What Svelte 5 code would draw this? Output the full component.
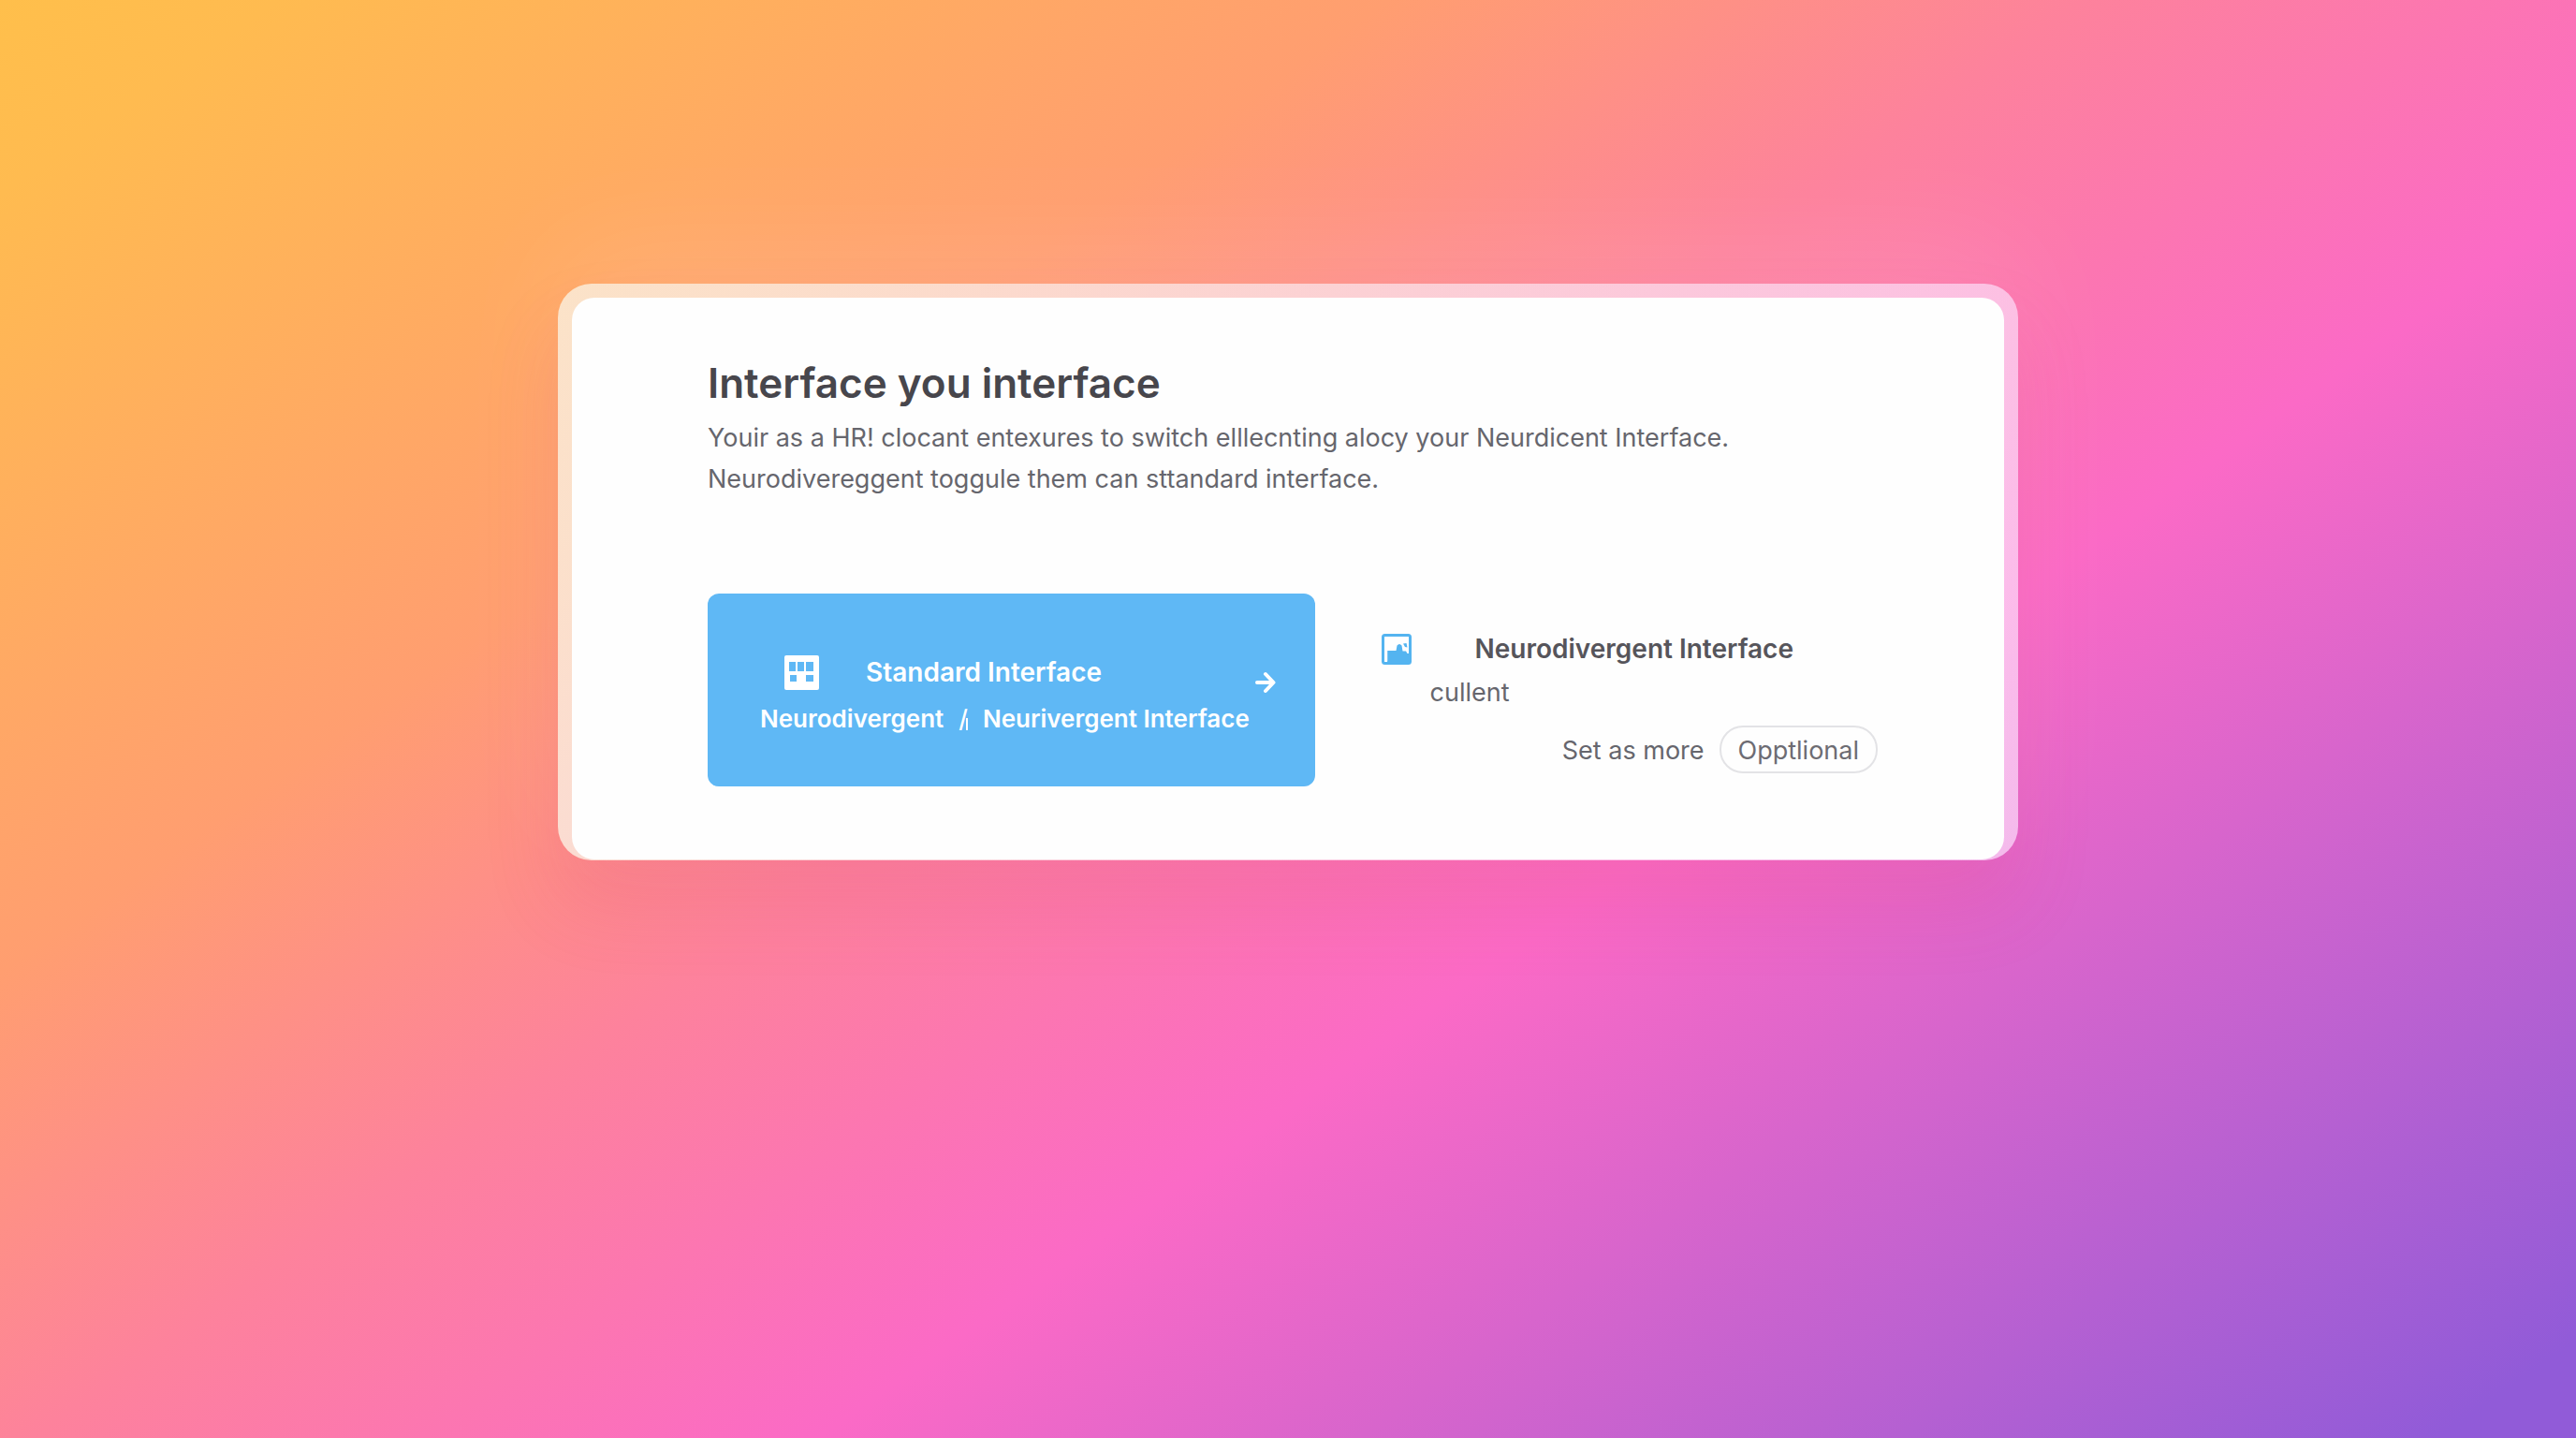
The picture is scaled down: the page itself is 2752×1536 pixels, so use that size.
<script>
  let selected = $state('standard');
</script>

<main class="page">
  <section class="frame">
    <div class="card">
      <h1>Interface you interface</h1>
      <p class="intro">
        Youir as a HR! clocant entexures to switch elllecnting alocy your Neurdicent Interface.<br />
        Neurodivereggent toggule them can sttandard interface.
      </p>

      <div class="options">
        <button
          class="primary"
          type="button"
          aria-pressed={selected === 'standard'}
          onclick={() => (selected = 'standard')}
        >
          <span class="lines">
            <span class="line first">
              <svg class="building" viewBox="0 0 37 37" aria-hidden="true">
                <rect width="37" height="37" rx="2" fill="#fff" />
                <g fill="#5fb8f5">
                  <rect x="5" y="7" width="7" height="10" />
                  <rect x="14" y="7" width="7" height="10" />
                  <rect x="23" y="7" width="8" height="10" />
                  <rect x="6" y="21" width="7" height="7" />
                  <rect x="23" y="21" width="8" height="7" />
                </g>
              </svg>
              <span>Standard Interface</span>
            </span>
            <span class="line second">
              <span>Neurodivergent</span>
              <span class="slash">/</span>
              <span>Neurivergent Interface</span>
            </span>
          </span>
          <svg class="arrow" viewBox="0 0 22 24" aria-hidden="true">
            <path d="M2 12H19M11 3L19.5 12L11 21" />
          </svg>
        </button>

        <article class="secondary">
          <header>
            <svg class="picture" viewBox="0 0 32 33" aria-hidden="true">
              <rect x="1.5" y="1.5" width="29" height="30" rx="2" fill="#fff" stroke="#54b4f0" stroke-width="3" />
              <path d="M6 18H15.5L16.5 12.5Q19 9.500 21.500 12.500L22.500 18.500H26L27.500 21H30V31H6Z" fill="#54b4f0" />
              <path d="M23 10.500L26.500 10L27.500 14.500L25 14Z" fill="#54b4f0" />
              <path d="M5 18V29.500" stroke="#fff" stroke-width="2.500" />
            </svg>
            <h2>Neurodivergent Interface</h2>
          </header>
          <p class="note">cullent</p>
          <footer>
            <span>Set as more</span>
            <button class="pill" type="button" onclick={() => (selected = 'neurodivergent')}>Opptlional</button>
          </footer>
        </article>
      </div>
    </div>
  </section>
</main>

<style>
  :global(body) {
    margin: 0;
  }

  .page {
    box-sizing: border-box;
    min-height: 100vh;
    padding: 303px 48px 64px;
    background: linear-gradient(145deg, #ffbf4b 0%, #ffbb50 6%, #ff9e70 30%, #fd829c 45%, #fb6ac6 62%, #915bd8 97%);
    font-family: Inter, 'Liberation Sans', sans-serif;
    font-size: 27px;
    line-height: 44px;
    color: #66666d;
  }

  .frame {
    box-sizing: border-box;
    max-width: 1560px;
    margin: 0 auto;
    padding: 15px 15px 1px;
    border-radius: 36px;
    background: linear-gradient(90deg, rgba(250, 246, 234, 0.75), rgba(252, 226, 252, 0.68));
    box-shadow:
      0 48px 80px rgba(215, 60, 110, 0.16),
      0 -40px 120px rgba(255, 255, 255, 0.1);
  }

  .card {
    padding: 63px 135px 78px 145px;
    border-radius: 24px;
    background: #fefefe;
  }

  h1,
  h2,
  p {
    margin: 0;
  }

  h1 {
    font-size: 44px;
    font-weight: 600;
    line-height: 56px;
    color: #47464c;
  }

  .intro {
    margin-top: 9px;
  }

  .options {
    display: grid;
    grid-template-columns: 648fr 530fr;
    gap: 71px;
    margin-top: 100px;
  }

  button {
    font: inherit;
    cursor: pointer;
  }

  .primary {
    display: flex;
    align-items: flex-start;
    justify-content: space-between;
    padding: 59px 42px 47px 56px;
    border: 0;
    border-radius: 12px;
    background: #5fb8f5;
    color: #fff;
    font-weight: 600;
    line-height: 50px;
    text-align: left;
    white-space: nowrap;
  }

  .line {
    display: flex;
    align-items: center;
  }

  .first {
    gap: 50px;
    padding-left: 26px;
    font-size: 28px;
  }

  .second {
    gap: 16px;
    font-size: 26px;
  }

  .slash {
    position: relative;
    font-weight: 500;
  }

  .slash::after {
    content: '';
    position: absolute;
    left: 8px;
    top: 24px;
    width: 2px;
    height: 13px;
    background: #fff;
  }

  .building {
    width: 37px;
    height: 37px;
  }

  .arrow {
    flex: none;
    width: 22px;
    height: 24px;
    margin-top: 24px;
    fill: none;
    stroke: #fff;
    stroke-width: 4;
    stroke-linecap: round;
    stroke-linejoin: round;
  }

  .secondary {
    padding-top: 34px;
  }

  header {
    display: flex;
    align-items: center;
    gap: 68px;
  }

  .picture {
    flex: none;
    width: 32px;
    height: 33px;
  }

  h2 {
    font-size: 28px;
    font-weight: 600;
    line-height: 50px;
    color: #56555b;
  }

  .note {
    padding-left: 52px;
  }

  footer {
    display: flex;
    align-items: baseline;
    justify-content: flex-end;
    gap: 16px;
    margin-top: 13px;
  }

  .pill {
    padding: 3px 18px 0;
    border: 2px solid #e3e3e6;
    border-radius: 25px;
    background: #fefefe;
    color: #6d6c73;
  }
</style>
